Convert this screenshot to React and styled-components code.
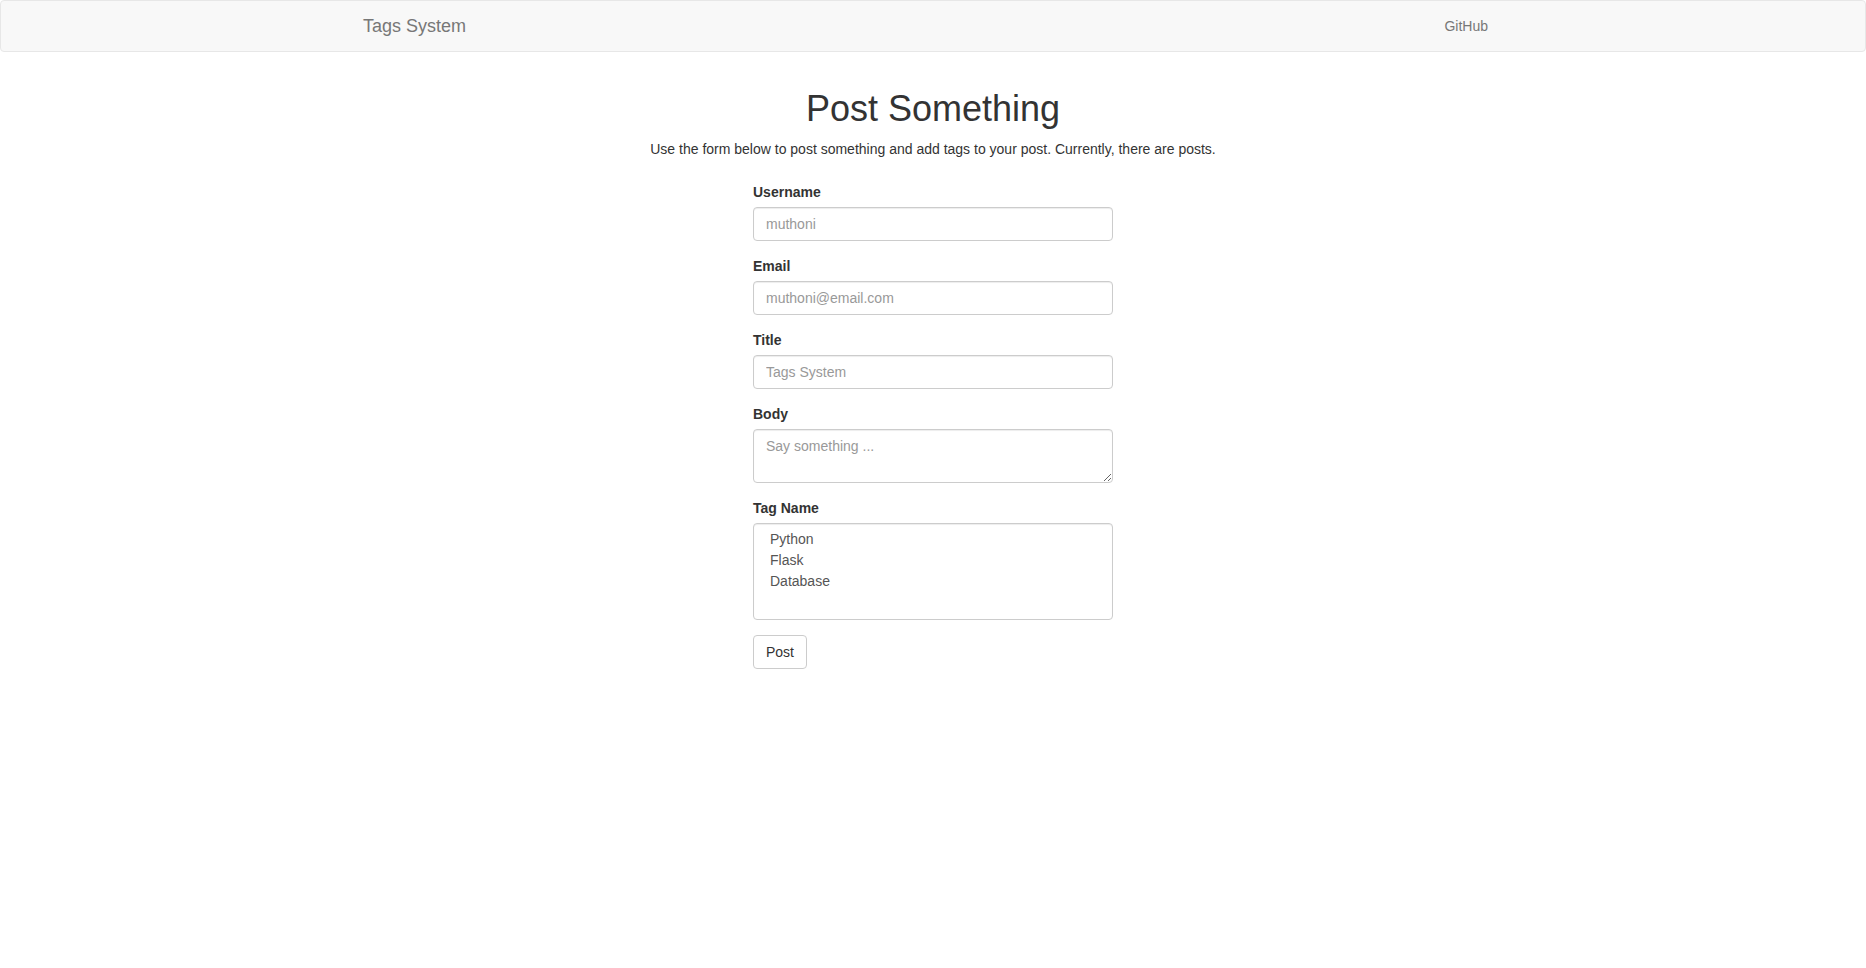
import React from "react";
import styled, { createGlobalStyle } from "styled-components";

const GlobalStyle = createGlobalStyle`
  * {
    box-sizing: border-box;
  }

  body {
    margin: 0;
    font-family: "Liberation Sans", Helvetica, Arial, sans-serif;
    font-size: 14px;
    line-height: 1.42857143;
    color: #333;
    background: #fff;
  }
`;

const Navbar = styled.nav`
  min-height: 50px;
  margin-bottom: 20px;
  border: 1px solid #e7e7e7;
  border-radius: 4px;
  background: #f8f8f8;
`;

const Container = styled.div`
  width: 1170px;
  margin: 0 auto;
  padding: 0 15px;
`;

const NavInner = styled(Container)`
  display: flex;
  justify-content: space-between;
  align-items: flex-start;
`;

const Brand = styled.a`
  margin-left: -15px;
  padding: 15px;
  height: 50px;

  font-size: 18px;
  line-height: 20px;
  color: #777;
  text-decoration: none;
`;

const NavLink = styled.a`
  padding: 15px;

  line-height: 20px;
  color: #777;
  text-decoration: none;
`;

const Header = styled.div`
  text-align: center;
`;

const Title = styled.h1`
  margin: 37px 0 10px;

  font-size: 36px;
  font-weight: 500;
  line-height: 1.1;
  color: #333;
`;

const Lead = styled.p`
  margin: 0 0 10px;
`;

const Form = styled.form`
  width: 360px;
  margin: 23px auto 0;
`;

const FormGroup = styled.div`
  margin-bottom: 15px;
`;

const Label = styled.label`
  display: inline-block;
  margin-bottom: 5px;
  font-weight: bold;
`;

const fieldStyles = `
  display: block;
  width: 100%;
  padding: 6px 12px;

  font-family: inherit;
  font-size: 14px;
  line-height: 1.42857143;
  color: #555;

  background: #fff;
  border: 1px solid #ccc;
  border-radius: 4px;
  box-shadow: inset 0 1px 1px rgba(0, 0, 0, 0.075);

  &::placeholder {
    color: #999;
  }
`;

const Input = styled.input`
  ${fieldStyles}
  height: 34px;
`;

const TextArea = styled.textarea`
  ${fieldStyles}
  height: auto;
`;

const Select = styled.select`
  ${fieldStyles}
  height: 97px;

  option {
    min-height: 21px;
    padding: 1px 4px 0;
    line-height: 20px;
    color: #555;
  }
`;

const Button = styled.button`
  display: inline-block;
  padding: 6px 12px;

  font-family: inherit;
  font-size: 14px;
  line-height: 1.42857143;
  color: #333;

  background: #fff;
  border: 1px solid #ccc;
  border-radius: 4px;
  cursor: pointer;
`;

const tags = ["Python", "Flask", "Database"];

const App = () => (
  <>
    <GlobalStyle />
    <Navbar>
      <NavInner>
        <Brand href="#">Tags System</Brand>
        <NavLink href="#">GitHub</NavLink>
      </NavInner>
    </Navbar>
    <Container>
      <Header>
        <Title>Post Something</Title>
        <Lead>
          Use the form below to post something and add tags to your post.
          Currently, there are posts.
        </Lead>
      </Header>
      <Form onSubmit={e => e.preventDefault()}>
        <FormGroup>
          <Label htmlFor="username">Username</Label>
          <Input id="username" type="text" placeholder="muthoni" />
        </FormGroup>
        <FormGroup>
          <Label htmlFor="email">Email</Label>
          <Input id="email" type="email" placeholder="muthoni@email.com" />
        </FormGroup>
        <FormGroup>
          <Label htmlFor="title">Title</Label>
          <Input id="title" type="text" placeholder="Tags System" />
        </FormGroup>
        <FormGroup>
          <Label htmlFor="body">Body</Label>
          <TextArea id="body" rows={2} placeholder="Say something ..." />
        </FormGroup>
        <FormGroup>
          <Label htmlFor="tags">Tag Name</Label>
          <Select id="tags" multiple defaultValue={[]}>
            {tags.map(tag => (
              <option key={tag} value={tag}>
                {tag}
              </option>
            ))}
          </Select>
        </FormGroup>
        <Button type="submit">Post</Button>
      </Form>
    </Container>
  </>
);

export default App;
